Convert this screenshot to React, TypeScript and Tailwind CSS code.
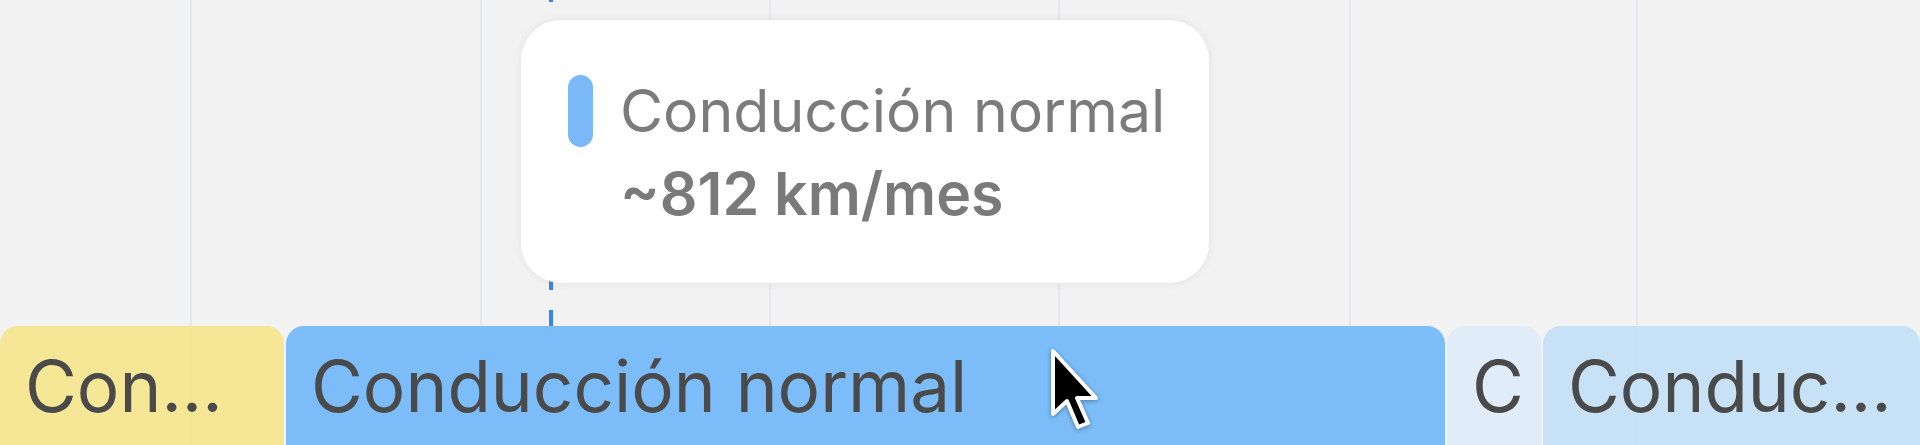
import React from "react";

type Segment = {
  label: string;
  width: number;
  color: string;
};

const segments: Segment[] = [
  { label: "Con...", width: 284, color: "bg-[#f6e690]/95" },
  { label: "Conducción normal", width: 1159, color: "bg-[#7bbcf9]" },
  { label: "C", width: 94, color: "bg-[#deebf7]/95" },
  { label: "Conduc...", width: 377, color: "bg-[#c4dff6]/95" },
];

const gridLines = [191, 481, 770, 1059, 1350, 1637];

function Cursor() {
  return (
    <svg width="52" height="86" viewBox="0 0 52 86" className="drop-shadow-[0_1px_2px_rgba(0,0,0,0.35)]">
      <path
        d="M3 3 L3 66 L17 53 L28 79 L38 75 L27 50 L46 50 Z"
        fill="#000"
        stroke="#fff"
        strokeWidth="4"
        strokeLinejoin="round"
      />
    </svg>
  );
}

export default function App() {
  return (
    <div
      className="relative w-[1920px] h-[445px] overflow-hidden bg-[#f1f2f1]"
      style={{ fontFamily: "Inter, 'Noto Sans', sans-serif" }}
    >
      {/* rejilla + cursor de tiempo */}
      <svg className="absolute inset-0" width="1920" height="445">
        {gridLines.map((x) => (
          <line key={x} x1={x} y1={0} x2={x} y2={445} stroke="#e4e7ef" strokeWidth="2" />
        ))}
        <line
          x1={551}
          y1={326}
          x2={551}
          y2={0}
          stroke="#3b82f6"
          strokeWidth="4"
          strokeDasharray="16 20"
        />
      </svg>

      <div className="relative flex flex-col h-full">
        <div className="h-[326px] shrink-0" />
        <div className="flex gap-[2px] flex-1">
          {segments.map((s) => (
            <div
              key={s.label}
              className={`${s.color} rounded-t-[18px] shrink-0 overflow-hidden whitespace-nowrap px-[25px] pt-[25px] text-[71px] leading-none text-[#4a4a4a]`}
              style={{ width: s.width }}
            >
              {s.label}
            </div>
          ))}
        </div>
      </div>

      {/* tooltip */}
      <div className="absolute left-[521px] top-[20px] w-[688px] h-[263px] rounded-[40px] bg-white shadow-[0_0_10px_rgba(0,0,0,0.07)] pl-[47px] pr-[51px] pt-[55px]">
        <div className="flex items-center gap-[27px]">
          <span className="w-[25px] h-[72px] rounded-full bg-[#7ab8f8] shrink-0" />
          <span className="text-[59px] leading-[72px] text-[#7b7b7b] whitespace-nowrap">
            Conducción normal
          </span>
        </div>
        <div className="mt-[11px] pl-[52px] text-[59px] leading-[72px] font-semibold text-[#7a7a7a] whitespace-nowrap">
          ~812 km/mes
        </div>
      </div>

      <div className="absolute left-[1050px] top-[348px]">
        <Cursor />
      </div>
    </div>
  );
}
